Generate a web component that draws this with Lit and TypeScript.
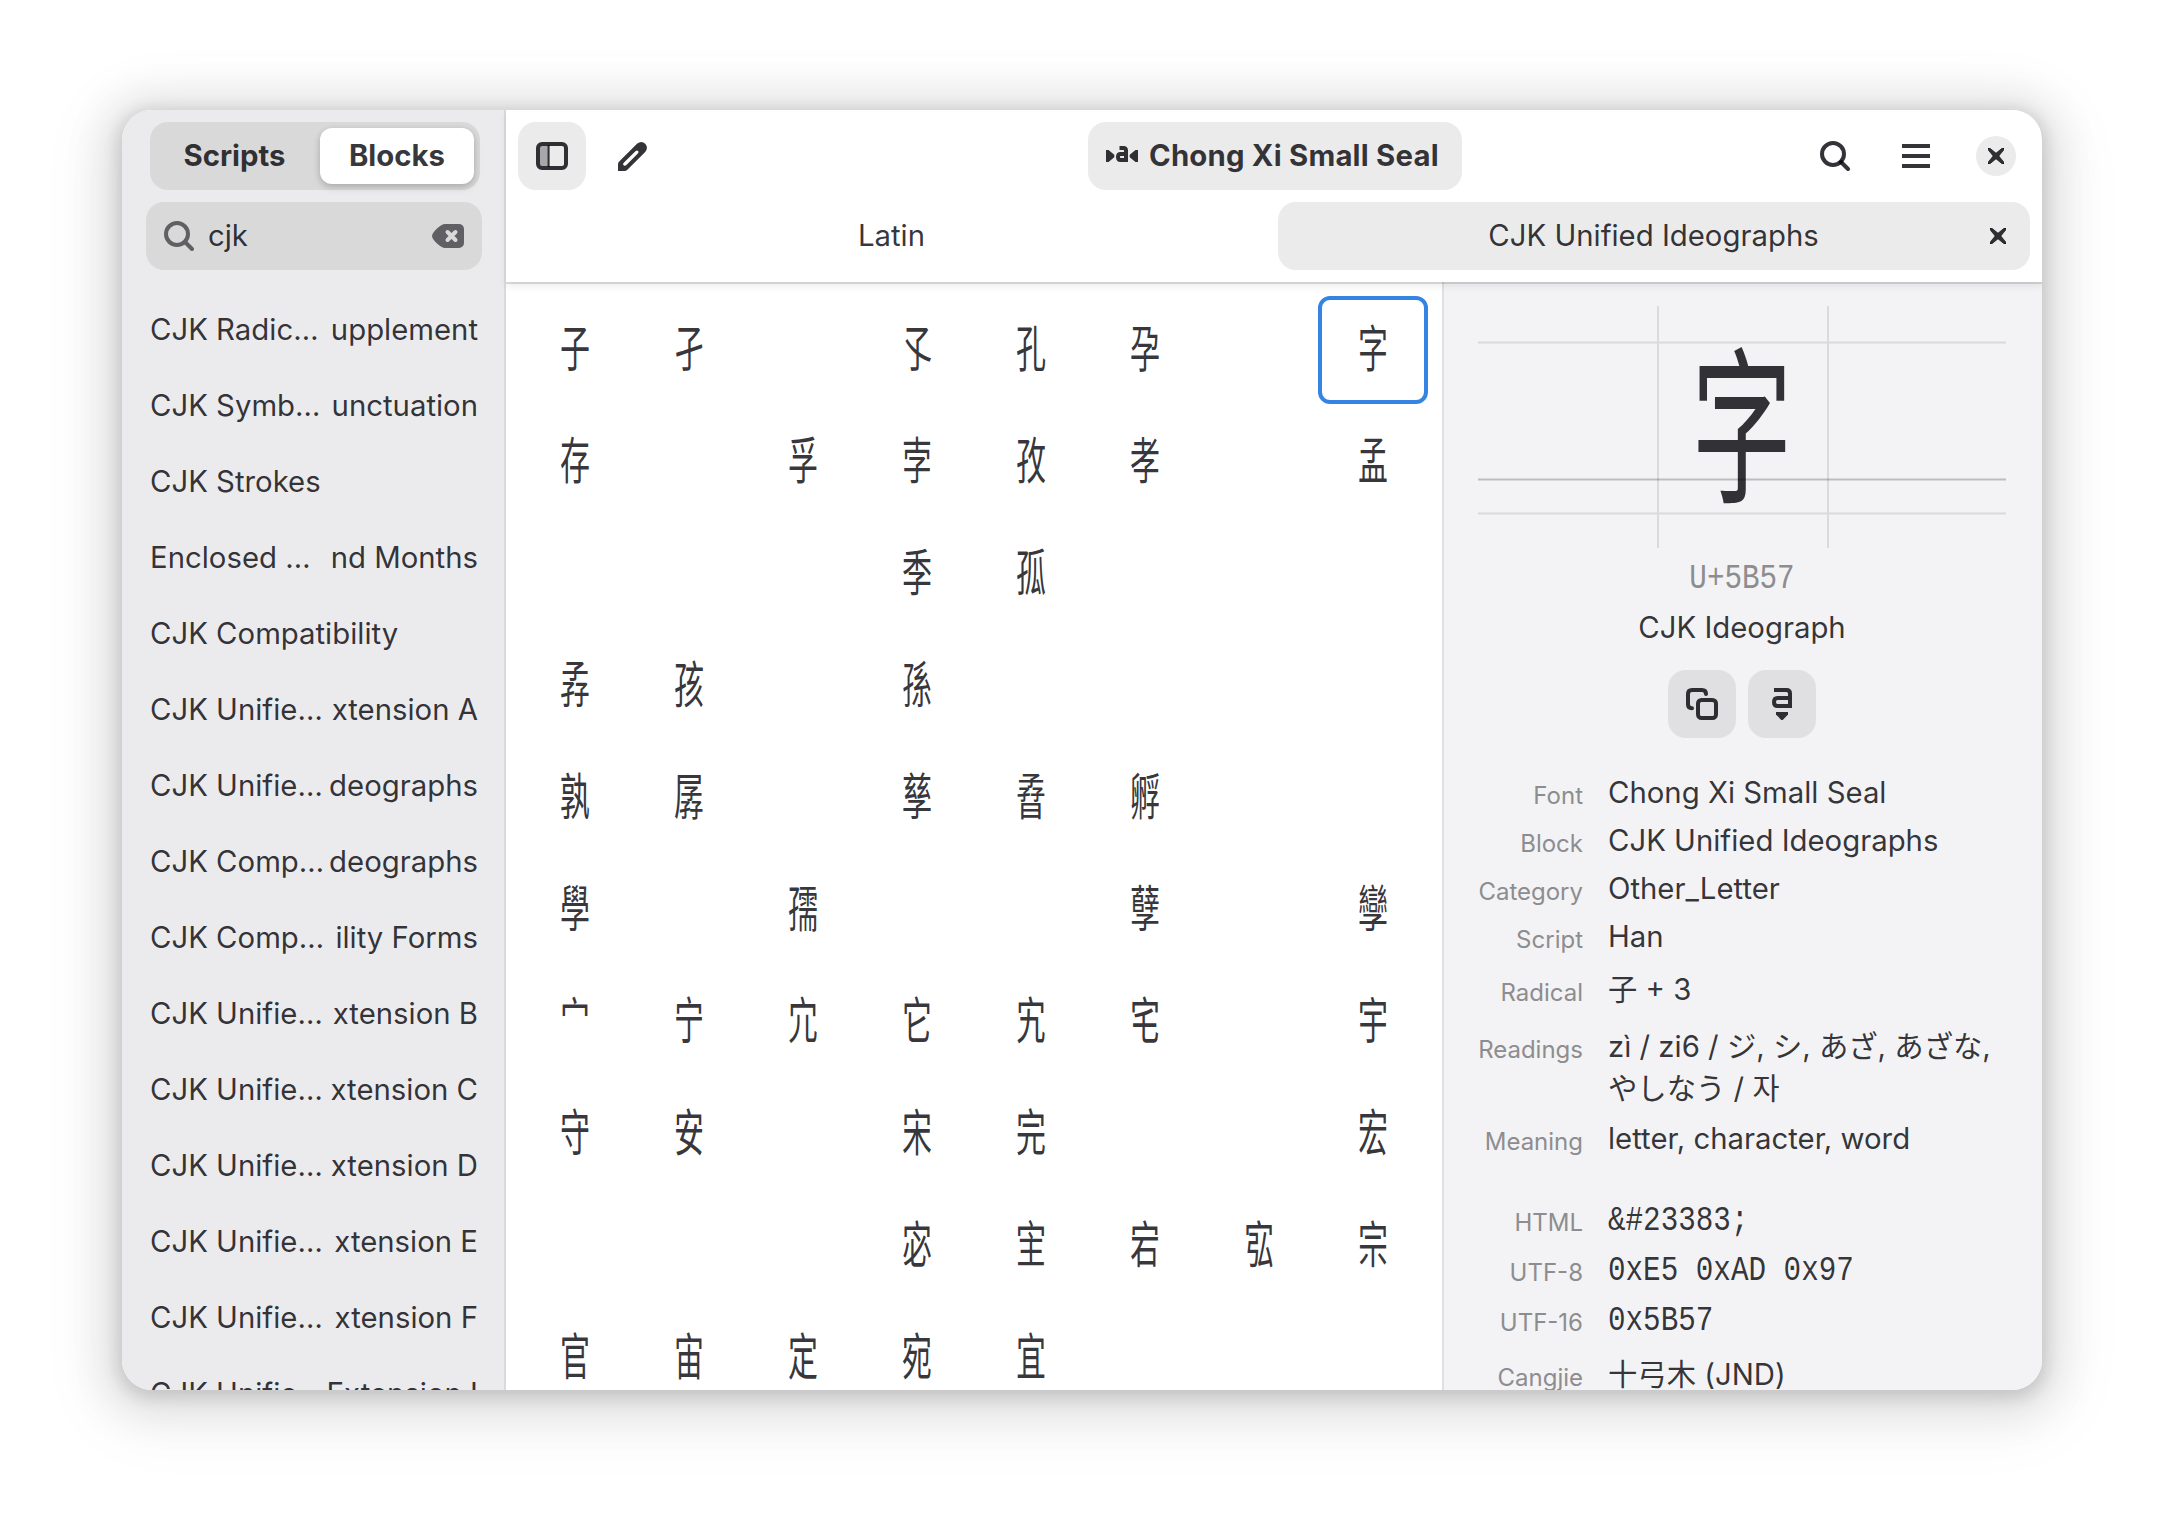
import { LitElement, html, svg, css, nothing } from "lit";
import { customElement, property, state } from "lit/decorators.js";
import { classMap } from "lit/directives/class-map.js";

const BLOCKS: [string, string][] = [
  ["CJK Radic…", "upplement"],
  ["CJK Symb…", "unctuation"],
  ["CJK Strokes", ""],
  ["Enclosed …", "nd Months"],
  ["CJK Compatibility", ""],
  ["CJK Unifie…", "xtension A"],
  ["CJK Unifie…", "deographs"],
  ["CJK Comp…", "deographs"],
  ["CJK Comp…", "ility Forms"],
  ["CJK Unifie…", "xtension B"],
  ["CJK Unifie…", "xtension C"],
  ["CJK Unifie…", "xtension D"],
  ["CJK Unifie…", "xtension E"],
  ["CJK Unifie…", "xtension F"],
  ["CJK Unifie…", "Extension I"],
];

// One string per row of eight code points; a dot is a glyph the font lacks.
const GLYPH_ROWS = [
  "子孑.孓孔孕.字",
  "存.孚孛孜孝.孟",
  "...季孤...",
  "孨孩.孫....",
  "孰孱.孳孴孵..",
  "學.孺..孽.孿",
  "宀宁宂它宄宅.宇",
  "守安.宋完..宏",
  "...宓宔宕宖宗",
  "官宙定宛宜...",
];

interface Detail {
  label: string;
  value: string;
  kind?: "mono" | "lines";
  gap?: number;
}

const DETAILS: Detail[] = [
  { label: "Font", value: "Chong Xi Small Seal" },
  { label: "Block", value: "CJK Unified Ideographs" },
  { label: "Category", value: "Other_Letter" },
  { label: "Script", value: "Han" },
  { label: "Radical", value: "子 + 3", gap: 5 },
  { label: "Readings", value: "zì / zi6 / ジ, シ, あざ, あざな, やしなう / 자", kind: "lines", gap: 12 },
  { label: "Meaning", value: "letter, character, word", gap: 5 },
  { label: "HTML", value: "&#23383;", kind: "mono", gap: 33 },
  { label: "UTF-8", value: "0xE5 0xAD 0x97", kind: "mono", gap: 2 },
  { label: "UTF-16", value: "0x5B57", kind: "mono", gap: 2 },
  { label: "Cangjie", value: "十弓木 (JND)", gap: 7 },
];

const ICONS: Record<string, { w: number; h: number; body: unknown }> = {
  search: {
    w: 30, h: 30,
    body: svg`<circle cx="13" cy="13" r="11" fill="none" stroke="currentColor" stroke-width="4"/>
      <path d="M21 21l7 7" stroke="currentColor" stroke-width="4" stroke-linecap="round"/>`,
  },
  clear: {
    w: 32, h: 24,
    body: svg`<path fill="currentColor" d="M13 0H27a5 5 0 0 1 5 5V19a5 5 0 0 1-5 5H13C9 24 0 16 0 12S9 0 13 0z"/>
      <path d="M15.5 8l8 8M23.5 8l-8 8" stroke="#d9d9da" stroke-width="4" stroke-linecap="round"/>`,
  },
  sidebar: {
    w: 32, h: 28,
    body: svg`<path d="M4 4h8v20H4z" fill="currentColor" opacity=".36"/>
      <path d="M12.6 3v22" stroke="currentColor" stroke-width="2"/>
      <rect x="2" y="2" width="28" height="24" rx="4" fill="none" stroke="currentColor" stroke-width="4"/>`,
  },
  pencil: {
    w: 29, h: 29,
    body: svg`<path fill="currentColor" fill-rule="evenodd" d="M0 29V22.5Q0 20.8 1.2 19.6L19 1.8Q23.500 -1.8 27.200 1.800Q30.700 5.600 27.200 10L9.400 27.800Q8.200 29 6.500 29zM5 22.400Q6.600 24.600 8.400 23L19.600 11.800Q21.200 9.800 20 9Q19 8 17.200 9.400L6 20.600Q5 21.600 5 22.400z"/>`,
  },
  menu: {
    w: 28, h: 24,
    body: svg`<path d="M0 2h28M0 12h28M0 22h28" stroke="currentColor" stroke-width="4"/>`,
  },
  close: {
    w: 16, h: 16,
    body: svg`<path d="M1.600 0L8 5.200 14.400 0H16V1.600L10.800 8 16 14.400V16H14.400L8 10.800 1.600 16H0V14.400L5.200 8 0 1.600V0z" fill="currentColor" stroke="currentColor" stroke-width=".8"/>`,
  },
  font: {
    w: 32, h: 20,
    body: svg`<path d="M0 4H2.500L8 8.500Q9 10 8 11.500L2.500 16H0zM32 4H29.500L24 8.500Q23 10 24 11.500L29.500 16H32z" fill="currentColor"/>
      <path d="M13.500 2H17.500Q20 2 20 4.500V16M20 8H14.500Q12 8 12 11T14.500 14H20" fill="none" stroke="currentColor" stroke-width="4"/>`,
  },
  copy: {
    w: 32, h: 32,
    body: svg`<path d="M6 20.200Q2 20.200 2 16.500V6Q2 2 6 2H16Q20 2 20 6" fill="none" stroke="currentColor" stroke-width="4" stroke-linecap="round"/>
      <rect x="12" y="12" width="18" height="18" rx="3.500" fill="none" stroke="currentColor" stroke-width="4"/>`,
  },
  variant: {
    w: 20, h: 32,
    body: svg`<path d="M2 2H14.500Q18 2 18 5.500V20M18 10H5.500Q2 10 2 14T5.500 18H18" fill="none" stroke="currentColor" stroke-width="4"/>
      <path d="M4 24H16V26.500L11.200 31.400Q10 32.500 8.800 31.400L4 26.500z" fill="currentColor"/>`,
  },
};

@customElement("sym-icon")
class SymIcon extends LitElement {
  @property() name = "close";
  static styles = css`
    :host { display: inline-flex; flex: none; }
    svg { display: block; }
  `;
  render() {
    const i = ICONS[this.name];
    return html`<svg width=${i.w} height=${i.h} viewBox="0 0 ${i.w} ${i.h}">${i.body}</svg>`;
  }
}

@customElement("block-sidebar")
class BlockSidebar extends LitElement {
  static styles = css`
    :host {
      display: flex; flex-direction: column; box-sizing: border-box;
      width: 384px; flex: none; background: #ebebed;
      border-right: 2px solid #dadadc; overflow: hidden;
    }
    .switch {
      display: flex; box-sizing: border-box; height: 68px; flex: none;
      margin: 12px 24px 0 28px; padding: 6px; border-radius: 18px;
      background: #d9d9da; font-weight: 700;
    }
    .option { flex: 1; display: flex; align-items: center; justify-content: center; border-radius: 12px; }
    .option.first { flex: 0 0 164px; padding-right: 7px; box-sizing: border-box; }
    .option.on { background: #fff; box-shadow: 0 2px 6px rgba(0, 0, 6, 0.16), 0 4px 10px rgba(0, 0, 6, 0.08); }
    .entry {
      display: flex; align-items: center; box-sizing: border-box; flex: none;
      height: 68px; margin: 12px 22px 0 24px; padding: 0 18px; border-radius: 18px; background: #d9d9da;
    }
    .entry sym-icon { color: #606064; }
    .query { flex: 1; padding-left: 14px; }
    .list { margin-top: 22px; flex: 1; min-height: 0; overflow: hidden; }
    .row {
      display: flex; justify-content: space-between; height: 76px; line-height: 76px;
      padding: 0 26px 0 28px; white-space: nowrap;
    }
  `;
  render() {
    return html`
      <div class="switch"><span class="option first">Scripts</span><span class="option on">Blocks</span></div>
      <div class="entry">
        <sym-icon name="search"></sym-icon><span class="query">cjk</span><sym-icon name="clear"></sym-icon>
      </div>
      <div class="list">
        ${BLOCKS.map(([head, tail]) => html`<div class="row"><span>${head}</span>${tail ? html`<span>${tail}</span>` : nothing}</div>`)}
      </div>
    `;
  }
}

@customElement("window-header")
class WindowHeader extends LitElement {
  static styles = css`
    :host {
      display: flex; flex-direction: column; box-sizing: border-box; height: 172px; flex: none;
      padding: 12px; gap: 12px; background: #fff; z-index: 1;
      box-shadow: 0 2px rgba(0, 0, 6, 0.12), 0 4px 8px rgba(0, 0, 6, 0.08);
    }
    .bar { display: grid; grid-template-columns: 1fr auto 1fr; align-items: center; height: 68px; }
    .start, .end { display: flex; align-items: center; gap: 12px; }
    .end { justify-content: flex-end; }
    .button { display: flex; align-items: center; justify-content: center; width: 68px; height: 68px; border-radius: 18px; }
    .find { padding-right: 2px; box-sizing: border-box; }
    .filled { background: #ebebeb; }
    .title {
      display: flex; align-items: center; box-sizing: border-box; height: 68px; width: 374px; margin-left: 2px;
      padding: 0 18px; gap: 11px; border-radius: 18px; background: #ebebeb;
      font-weight: 700; letter-spacing: 0.2px; white-space: nowrap;
    }
    .round {
      display: flex; align-items: center; justify-content: center;
      width: 40px; height: 40px; border-radius: 50%; background: #ebebeb; margin: 0 14px;
    }
    .tabs { display: grid; grid-template-columns: 748px 752px; gap: 12px; height: 68px; }
    .tab { display: grid; grid-template-columns: 40px 1fr 40px; align-items: center; justify-items: center; border-radius: 18px; }
    .tab.on { background: #ebebeb; }
    .name { grid-column: 2; margin-right: 1px; }
    .tab sym-icon { justify-self: start; }
  `;
  render() {
    return html`
      <div class="bar">
        <div class="start">
          <span class="button filled"><sym-icon name="sidebar"></sym-icon></span>
          <span class="button"><sym-icon name="pencil"></sym-icon></span>
        </div>
        <div class="title"><sym-icon name="font"></sym-icon><span>Chong Xi Small Seal</span></div>
        <div class="end">
          <span class="button find"><sym-icon name="search"></sym-icon></span>
          <span class="button"><sym-icon name="menu"></sym-icon></span>
          <span class="round"><sym-icon name="close"></sym-icon></span>
        </div>
      </div>
      <div class="tabs">
        <div class="tab"><span class="name">Latin</span></div>
        <div class="tab on"><span class="name">CJK Unified Ideographs</span><sym-icon name="close"></sym-icon></div>
      </div>
    `;
  }
}

@customElement("glyph-grid")
class GlyphGrid extends LitElement {
  @property() selected = "字";
  static styles = css`
    :host { display: block; width: 936px; flex: none; background: #fff; overflow: hidden; }
    .grid { display: grid; grid-template-columns: repeat(8, 110px); grid-auto-rows: 108px; gap: 4px; padding: 14px; }
    .cell {
      display: flex; align-items: center; justify-content: center; box-sizing: border-box;
      border: 4px solid transparent; border-radius: 12px;
      font-family: "Noto Sans CJK TC", "Noto Sans CJK SC", sans-serif; font-size: 50px; line-height: 100px;
    }
    .cell.on { border-color: #3584e4; }
    .cell span { transform: translateY(-5px) scaleX(0.6); }
  `;
  render() {
    return html`<div class="grid" lang="zh-Hant">
      ${GLYPH_ROWS.flatMap((row) => [...row]).map(
        (ch) => html`<div class=${classMap({ cell: true, on: ch === this.selected })}>${ch === "." ? nothing : html`<span>${ch}</span>`}</div>`
      )}
    </div>`;
  }
}

@customElement("glyph-details")
class GlyphDetails extends LitElement {
  @property() glyph = "字";
  static styles = css`
    :host {
      display: flex; flex-direction: column; box-sizing: border-box; flex: 1; min-width: 0;
      border-left: 2px solid #e0e0e3; background: #f3f3f5; padding: 24px 36px 0 34px; overflow: hidden;
    }
    .preview { position: relative; display: flex; align-items: center; justify-content: center; flex: none; width: 528px; height: 242px; }
    .guides { position: absolute; inset: 0; }
    .big {
      font-family: "Noto Sans CJK TC", "Noto Sans CJK SC", sans-serif; font-size: 168px; line-height: 242px;
      transform: translateY(-10px) scaleX(0.6);
    }
    .code, .mono { font-family: "Liberation Mono", monospace; font-size: 35px; }
    .code { text-align: center; line-height: 48px; margin-top: 7px; color: #8d8d8f; width: 528px; transform: scaleX(0.836); }
    .kind { text-align: center; line-height: 48px; margin-top: 1px; width: 528px; }
    .actions { display: flex; justify-content: center; gap: 12px; margin-top: 18px; width: 528px; }
    .action { display: flex; align-items: center; justify-content: center; width: 68px; height: 68px; border-radius: 18px; background: #e0e0e2; }
    .rows { margin-top: 31px; }
    .row { display: grid; grid-template-columns: 105px 1fr; column-gap: 25px; line-height: 48px; }
    .label { text-align: right; font-size: 24px; color: #8d8d8f; padding-top: 3px; box-sizing: border-box; height: 48px; }
    .value.lines { line-height: 42px; }
    .lines-label { line-height: 42px; }
    .value.mono { padding-top: 1px; height: 47px; white-space: pre; transform: scaleX(0.836); transform-origin: 0 50%; }
  `;
  render() {
    return html`
      <div class="preview">
        <svg class="guides" width="528" height="242">
          <g stroke="#000006" fill="none">
            <path d="M0 36.500H528M0 207.500H528M180 0V242M350 0V242" stroke-width="2" stroke-opacity=".1"/>
            <path d="M0 173.500H528" stroke-width="2" stroke-opacity=".22"/>
          </g>
        </svg>
        <span class="big" lang="zh-Hant">${this.glyph}</span>
      </div>
      <div class="code">U+5B57</div>
      <div class="kind">CJK Ideograph</div>
      <div class="actions">
        <span class="action"><sym-icon name="copy"></sym-icon></span>
        <span class="action"><sym-icon name="variant"></sym-icon></span>
      </div>
      <div class="rows">
        ${DETAILS.map(
          (d) => html`<div class="row" style="margin-top:${d.gap ?? 0}px">
            <span class=${classMap({ label: true, "lines-label": d.kind === "lines" })}>${d.label}</span>
            <span class=${classMap({ value: true, mono: d.kind === "mono", lines: d.kind === "lines" })}>${d.value}</span>
          </div>`
        )}
      </div>
    `;
  }
}

@customElement("app-root")
class AppRoot extends LitElement {
  @state() private selected = "字";
  static styles = css`
    :host {
      display: block; box-sizing: border-box; width: 2164px; height: 1524px; padding: 110px 122px 134px;
      background: #fff; overflow: hidden; color: rgba(0, 0, 6, 0.8);
      font-family: Inter, "Noto Sans CJK JP", "Noto Sans CJK KR", sans-serif; font-size: 29.333px; line-height: 1.2;
    }
    .window {
      display: flex; width: 1920px; height: 1280px; border-radius: 30px;
      box-shadow: 0 4px 16px 4px rgba(0, 0, 0, 0.13), 0 6px 40px 20px rgba(0, 0, 0, 0.09),
        0 12px 64px 32px rgba(0, 0, 0, 0.04);
    }
    .clip { display: flex; width: 100%; height: 100%; border-radius: 30px; overflow: hidden; }
    .main { display: flex; flex-direction: column; flex: 1; min-width: 0; }
    .content { display: flex; flex: 1; min-height: 0; }
  `;
  render() {
    return html`
      <div class="window"><div class="clip">
        <block-sidebar></block-sidebar>
        <div class="main">
          <window-header></window-header>
          <div class="content">
            <glyph-grid .selected=${this.selected}></glyph-grid>
            <glyph-details .glyph=${this.selected}></glyph-details>
          </div>
        </div>
      </div></div>
    `;
  }
}
